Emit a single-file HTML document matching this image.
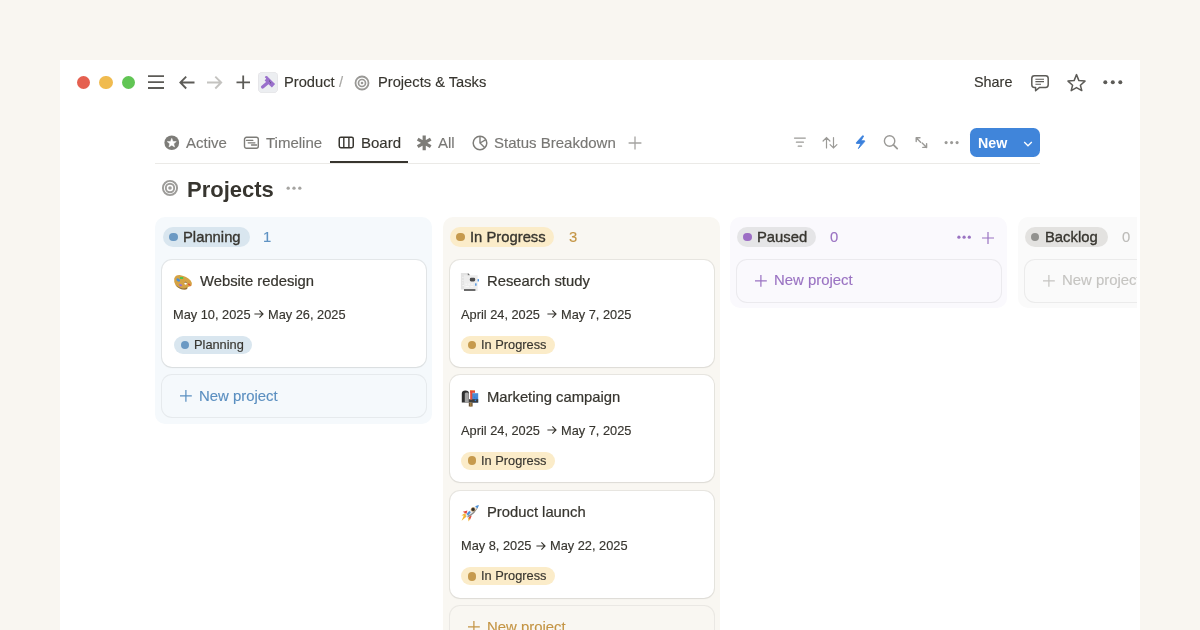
<!DOCTYPE html>
<html><head><meta charset="utf-8">
<style>
*{box-sizing:border-box;margin:0;padding:0}
html,body{width:1200px;height:630px;overflow:hidden}
body{background:#f9f6f1;font-family:"Liberation Sans",sans-serif;color:#37352f;position:relative}
.win{position:absolute;left:60px;top:60px;width:1080px;height:570px;background:#fff}
.a{position:absolute;white-space:nowrap;line-height:1em;will-change:transform}
.dot{position:absolute;border-radius:50%}
svg{position:absolute;overflow:visible}
.clip{position:absolute;left:0;top:0;width:1137px;height:630px;overflow:hidden}
.col{position:absolute;top:217px;width:277px;border-radius:10px}
.card{position:absolute;background:#fff;border-radius:10px;box-shadow:0 0 0 1px rgba(55,53,47,0.09),0 1px 2px rgba(15,15,15,0.05)}
.newb{position:absolute;border-radius:10px;box-shadow:0 0 0 1px rgba(55,53,47,0.075)}
.pill{position:absolute;height:20px;border-radius:10px}
.cpill{position:absolute;height:18px;border-radius:9px}
</style></head><body>
<div class="win"></div>
<div class="dot" style="left:76.9px;top:75.6px;width:13.2px;height:13.2px;background:#e56050"></div>
<div class="dot" style="left:99.4px;top:75.6px;width:13.2px;height:13.2px;background:#f0bb4f"></div>
<div class="dot" style="left:121.9px;top:75.6px;width:13.2px;height:13.2px;background:#61c554"></div>
<svg style="left:0;top:0" width="1200" height="630">
  <g stroke="#5c5b57" stroke-width="1.8" fill="none">
    <path d="M148 76.2H164M148 82.1H164M148 88H164"/>
    <path d="M194.5 82.5H180.5M186.2 76.6L180.3 82.5L186.2 88.5"/>
    <path d="M236.5 82.3H250M243.2 75.6V89"/>
  </g>
  <path d="M207 82.5H221M215.3 76.6L221.2 82.5L215.3 88.5" stroke="#c4c3c0" stroke-width="1.9" fill="none"/>
</svg>
<div style="position:absolute;left:258px;top:72.3px;width:19.8px;height:20.5px;background:#eceef1;border-radius:4.5px;box-shadow:inset 0 0 0 0.6px #e2e1e4"></div>
<svg style="left:258px;top:72.5px" width="20" height="20" viewBox="0 0 20 20">
  <path d="M4.6 14L10.6 9" stroke="#9a70cc" stroke-width="3.3" stroke-linecap="round"/>
  <path d="M13.9 14.4L17.1 11.1L10.4 4.4Q9 2.6 7.4 3.2L6.8 4.4Q8 4.6 8.2 5.8L6.6 7.4Z" fill="#9a70cc"/>
  <circle cx="11.6" cy="8" r="0.55" fill="#4a4458"/><circle cx="12.6" cy="9.8" r="0.55" fill="#4a4458"/>
</svg>
<div class="a" style="left:283.98px;top:74.91px;font-size:14.7px;color:#37352f;-webkit-text-stroke:0.15px #37352f;">Product</div>
<div class="a" style="left:338.68px;top:74.91px;font-size:14.7px;color:#a8a7a4;-webkit-text-stroke:0.15px #a8a7a4;">/</div>
<svg style="left:354.1px;top:74.5px" width="16" height="16" viewBox="0 0 16 16">
  <circle cx="8" cy="8" r="6.5" stroke="#999895" stroke-width="1.8" fill="none"/>
  <circle cx="8" cy="8" r="3.5" stroke="#999895" stroke-width="1.7" fill="none"/>
  <circle cx="8" cy="8" r="1.3" fill="#999895"/>
</svg>
<div class="a" style="left:378.18px;top:74.91px;font-size:14.7px;color:#37352f;-webkit-text-stroke:0.15px #37352f;">Projects &amp; Tasks</div>
<div class="a" style="left:974.29px;top:75.36px;font-size:14.4px;color:#37352f;-webkit-text-stroke:0.15px #37352f;">Share</div>
<svg style="left:0;top:0" width="1200" height="630">
  <path d="M1034.4 75.8H1045.6Q1048.2 75.8 1048.2 78.4V84.8Q1048.2 87.4 1045.6 87.4H1039.6L1035.6 90.8V87.4H1034.4Q1031.8 87.4 1031.8 84.8V78.4Q1031.8 75.8 1034.4 75.8Z" stroke="#5c5b57" stroke-width="1.5" fill="none" stroke-linejoin="round"/>
  <path d="M1035.4 79.3H1044M1035.4 81.6H1044M1035.4 84.3H1041" stroke="#5c5b57" stroke-width="1.1"/>
  <path d="M1076.5 74.6L1078.9 80.6L1085 81.1L1080.4 85.2L1081.8 90.6L1076.5 87.6L1071.2 90.6L1072.6 85.2L1068 81.1L1074.1 80.6Z" stroke="#5c5b57" stroke-width="1.5" fill="none" stroke-linejoin="round"/>
</svg>
<svg style="left:1102px;top:78px" width="22" height="8" viewBox="0 0 22 8">
  <circle cx="3.3" cy="4.2" r="2" fill="#5c5b57"/><circle cx="10.8" cy="4.2" r="2" fill="#5c5b57"/><circle cx="18.3" cy="4.2" r="2" fill="#5c5b57"/>
</svg>
<svg style="left:163.75px;top:135px" width="15.5" height="15.5" viewBox="0 0 16 16">
  <circle cx="8" cy="8" r="7.6" fill="#7d7c78"/>
  <path d="M8.00 3.44L9.27 6.64L12.68 6.83L10.05 9.02L10.88 12.30L8.00 10.51L5.12 12.30L5.95 9.02L3.32 6.83L6.73 6.64Z" fill="#fff" stroke="#fff" stroke-width="0.5" stroke-linejoin="round"/>
</svg>
<div class="a" style="left:185.76px;top:135.45px;font-size:15px;color:#787774;-webkit-text-stroke:0.15px #787774;">Active</div>
<svg style="left:243px;top:135.5px" width="17" height="14" viewBox="0 0 17 14">
  <rect x="1.5" y="1.3" width="13.8" height="11" rx="2" stroke="#7d7c78" stroke-width="1.4" fill="none"/>
  <path d="M3.4 4.3H9.9M5.2 6.8H11.9M8.5 9H13.6" stroke="#7d7c78" stroke-width="1.3" stroke-linecap="round"/>
</svg>
<div class="a" style="left:265.76px;top:135.45px;font-size:15px;color:#787774;-webkit-text-stroke:0.15px #787774;">Timeline</div>
<svg style="left:338.3px;top:136.3px" width="16" height="13" viewBox="0 0 16 13">
  <rect x="1.25" y="1.25" width="14" height="10.4" rx="1.6" stroke="#37352f" stroke-width="1.5" fill="none"/>
  <path d="M5.8 1.3V11.6M10.9 1.3V11.6" stroke="#37352f" stroke-width="1.4"/>
</svg>
<div class="a" style="left:360.76px;top:135.45px;font-size:15px;color:#37352f;-webkit-text-stroke:0.15px #37352f;">Board</div>
<svg style="left:416px;top:134.5px" width="16" height="16" viewBox="0 0 16 16">
  <path d="M8.2 0.6V15.2M1.7 4.15L14.7 11.65M1.7 11.65L14.7 4.15" stroke="#7d7c78" stroke-width="3.2"/>
</svg>
<div class="a" style="left:438.26px;top:135.45px;font-size:15px;color:#787774;-webkit-text-stroke:0.15px #787774;">All</div>
<svg style="left:472px;top:134.5px" width="16" height="16" viewBox="0 0 16 16">
  <circle cx="8" cy="8" r="6.8" stroke="#7d7c78" stroke-width="1.5" fill="none"/>
  <path d="M8 1.2V8L12.8 12.8M8 8L13.9 4.6" stroke="#7d7c78" stroke-width="1.4" fill="none"/>
</svg>
<div class="a" style="left:493.96px;top:135.45px;font-size:15px;color:#787774;-webkit-text-stroke:0.15px #787774;">Status Breakdown</div>
<svg style="left:628px;top:135.5px" width="14" height="14" viewBox="0 0 14 14">
  <path d="M7 0.6V13.4M0.6 7H13.4" stroke="#a5a4a1" stroke-width="1.3"/>
</svg>
<svg style="left:0;top:0" width="1200" height="630">
  <g stroke="#9b9a97" stroke-width="1.3" fill="none" stroke-linecap="round">
    <path d="M794.5 138.1H805.3M796.4 142.2H803.4M798.2 146.2H801.6" stroke-width="1.25"/>
    <path d="M826.5 148V137.6M823.1 141L826.5 137.6L829.9 141M833.5 137.6V148M830.1 144.6L833.5 148L836.9 144.6" stroke-width="1.2"/>
    <circle cx="889.6" cy="141" r="5.2" stroke-width="1.4"/><path d="M893.5 144.9L897.2 148.6" stroke-width="1.8"/>
    <path d="M916.2 137.8L920.6 142.2M916.2 137.8V141.6M916.2 137.8H920M926.6 147.4L922.2 143M926.6 147.4V143.6M926.6 147.4H922.8" stroke-width="1.4"/>
  </g>
  <g fill="#9b9a97"><circle cx="946.1" cy="142.6" r="1.55"/><circle cx="951.6" cy="142.6" r="1.55"/><circle cx="957.1" cy="142.6" r="1.55"/></g>
  <path d="M862.8 135.6L856.4 142.6L856.4 143.4H860.9L858.4 148.6L864.6 141.6V140.8H860.9L863.6 136.2Z" fill="#3a80dc" stroke="#3a80dc" stroke-width="0.9" stroke-linejoin="round"/>
</svg>
<div style="position:absolute;left:970.2px;top:128px;width:69.5px;height:28.8px;background:#4085da;border-radius:6.5px"></div>
<div class="a" style="left:978.29px;top:136.13px;font-size:14.2px;color:#fff;font-weight:700;">New</div>
<svg style="left:1022px;top:139.5px" width="12" height="8" viewBox="0 0 12 8">
  <path d="M2.2 2L6 5.8L9.8 2" stroke="#fff" stroke-width="1.3" fill="none"/>
</svg>
<div style="position:absolute;left:155px;top:163px;width:885px;height:1px;background:#ebeae7"></div>
<div style="position:absolute;left:330px;top:161px;width:78px;height:2px;background:#37352f"></div>
<svg style="left:161.3px;top:178.9px" width="18" height="18" viewBox="0 0 18 18">
  <circle cx="9" cy="9" r="7.1" stroke="#9d9c99" stroke-width="1.9" fill="none"/>
  <circle cx="9" cy="9" r="4.2" stroke="#9d9c99" stroke-width="1.9" fill="none"/>
  <circle cx="9" cy="9" r="1.8" fill="#9d9c99"/>
</svg>
<div class="a" style="left:187.21px;top:178.50px;font-size:22px;color:#37352f;font-weight:700;">Projects</div>
<svg style="left:285px;top:185px" width="18" height="6" viewBox="0 0 18 6">
  <circle cx="3.2" cy="3.2" r="1.65" fill="#a5a4a1"/><circle cx="9" cy="3.2" r="1.65" fill="#a5a4a1"/><circle cx="14.8" cy="3.2" r="1.65" fill="#a5a4a1"/>
</svg>
<div class="clip">
<div class="col" style="left:155px;height:207px;background:#f5f9fc"></div>
<div class="pill" style="left:162.8px;top:227px;width:87px;background:#d9e6ef"></div>
<div class="dot" style="left:169.10000000000002px;top:232.7px;width:8.6px;height:8.6px;background:#6b99c3"></div>
<div class="a" style="left:182.87px;top:229.62px;font-size:14.8px;color:#37352f;-webkit-text-stroke:0.35px #37352f;">Planning</div>
<div class="a" style="left:262.97px;top:229.62px;font-size:14.8px;color:#5f93c3;-webkit-text-stroke:0.15px #5f93c3;">1</div>
<div class="col" style="left:443px;height:430px;background:#f9f7f2"></div>
<div class="pill" style="left:449.8px;top:227px;width:104.7px;background:#fbecc9"></div>
<div class="dot" style="left:456.1px;top:232.7px;width:8.6px;height:8.6px;background:#c69a4d"></div>
<div class="a" style="left:469.87px;top:229.62px;font-size:14.8px;color:#37352f;-webkit-text-stroke:0.35px #37352f;">In Progress</div>
<div class="a" style="left:569.07px;top:229.62px;font-size:14.8px;color:#c49545;-webkit-text-stroke:0.15px #c49545;">3</div>
<div class="col" style="left:729.8px;height:91px;background:#faf9fd"></div>
<div class="pill" style="left:737px;top:227px;width:79px;background:#e5e5e7"></div>
<div class="dot" style="left:743.3px;top:232.7px;width:8.6px;height:8.6px;background:#9d6ec5"></div>
<div class="a" style="left:757.07px;top:229.62px;font-size:14.8px;color:#37352f;-webkit-text-stroke:0.35px #37352f;">Paused</div>
<div class="a" style="left:830.07px;top:229.62px;font-size:14.8px;color:#9a73c2;-webkit-text-stroke:0.15px #9a73c2;">0</div>
<div class="col" style="left:1017.8px;height:91px;background:#fafafa"></div>
<div class="pill" style="left:1024.5px;top:227px;width:83.1px;background:#e3e2e0"></div>
<div class="dot" style="left:1030.8px;top:232.7px;width:8.6px;height:8.6px;background:#91918e"></div>
<div class="a" style="left:1044.57px;top:229.62px;font-size:14.8px;color:#37352f;-webkit-text-stroke:0.35px #37352f;">Backlog</div>
<div class="a" style="left:1122.37px;top:229.62px;font-size:14.8px;color:#bcbbb8;-webkit-text-stroke:0.15px #bcbbb8;">0</div>
<div class="card" style="left:162px;top:259.7px;width:264px;height:107px"></div>
<svg style="left:170px;top:270px" width="26" height="26" viewBox="0 0 26 26">
  <path d="M4.2 8.6Q5.6 4.6 10.6 5.2Q16.4 6 20.6 10.6Q22.8 13.4 21.6 15.6Q20.8 16.4 19.4 16.6Q17.6 16.6 17.4 18.2Q16.8 19.8 14.2 19.6Q8.8 19 5.6 15.2Q3.6 12 4.2 8.6Z" fill="#d5a244"/>
  <path d="M5.6 15.2Q8.8 19 14.2 19.6Q16.8 19.8 17.4 18.2L16.6 17.6Q15.4 18.8 12.6 18.4Q8.6 17.6 5.6 15.2Z" fill="#8a6a3a"/>
  <ellipse cx="15.6" cy="13.6" rx="1.3" ry="1.1" fill="#fff"/>
  <path d="M14.6 12.6Q15.6 11.8 16.8 12.8" stroke="#5a4630" stroke-width="0.6" fill="none"/>
  <ellipse cx="8.2" cy="10" rx="2.1" ry="1.4" transform="rotate(40 8.2 10)" fill="#4a90d9"/>
  <rect x="9.9" y="6.9" width="3.3" height="2.1" rx="0.5" fill="#4fc34c"/>
  <path d="M9 14.2Q10.6 13.4 12.4 15.4Q11.6 16.6 9.6 16Z" fill="#9a70d2"/>
  <path d="M18.2 13.2Q20.6 14 20.8 15.6Q19.4 16 18 14.6Z" fill="#e5483a"/>
</svg>
<div class="a" style="left:199.77px;top:273.72px;font-size:14.8px;color:#37352f;-webkit-text-stroke:0.22px #37352f;">Website redesign</div>
<div class="a" style="left:173.24px;top:308.82px;font-size:12.8px;color:#37352f;-webkit-text-stroke:0.15px #37352f;">May 10, 2025</div>
<svg style="left:254.2px;top:310.09999999999997px" width="10" height="8" viewBox="0 0 10 8">
  <path d="M0.4 4H9M5.4 0.4L9 4L5.4 7.6" stroke="#37352f" stroke-width="1.15" fill="none"/>
</svg>
<div class="a" style="left:268.24px;top:308.82px;font-size:12.8px;color:#37352f;-webkit-text-stroke:0.15px #37352f;">May 26, 2025</div>
<div class="cpill" style="left:173.7px;top:336.0px;width:78px;background:#d9e6ef"></div>
<div class="dot" style="left:180.5px;top:340.6px;width:8.6px;height:8.6px;background:#6b99c3"></div>
<div class="a" style="left:193.54px;top:338.82px;font-size:12.8px;color:#37352f;-webkit-text-stroke:0.15px #37352f;">Planning</div>
<div class="card" style="left:450px;top:259.7px;width:264px;height:107px"></div>
<svg style="left:457px;top:268px" width="26" height="26" viewBox="0 0 26 26">
  <path d="M3.9 5H10.9L12.6 6.8V21.5H3.9Z" fill="#e2e2e2"/>
  <path d="M10.9 5L12.8 7L12.8 8.4L10.6 8.4Z" fill="#6a6a6a"/>
  <path d="M5.4 9.4H6.4M7.6 9.4H8.8M5.4 12.4H6.4M7.6 12.4H9.6M5.4 15H6.2M5.4 17.6H9" stroke="#f8f8f8" stroke-width="1"/>
  <rect x="6.9" y="7.2" width="13.8" height="15.8" fill="#ededed"/>
  <rect x="12.8" y="9.8" width="5.4" height="3.6" rx="1.4" fill="#4d4d4d"/>
  <path d="M8.4 16.2H10M11.2 16.2H13M14.2 16.2H16M8.4 18.6H12M13.4 18.6H16.4" stroke="#fbfbfb" stroke-width="0.9"/>
  <rect x="7" y="21" width="11.4" height="2" fill="#6b6b6b"/>
  <rect x="20.6" y="11" width="1.3" height="2.6" rx="0.5" fill="#3d8be0"/>
  <rect x="18.2" y="15.2" width="1.3" height="2.6" rx="0.5" fill="#3d8be0"/>
</svg>
<div class="a" style="left:487.27px;top:273.72px;font-size:14.8px;color:#37352f;-webkit-text-stroke:0.22px #37352f;">Research study</div>
<div class="a" style="left:460.74px;top:308.82px;font-size:12.8px;color:#37352f;-webkit-text-stroke:0.15px #37352f;">April 24, 2025</div>
<svg style="left:546.6px;top:310.09999999999997px" width="10" height="8" viewBox="0 0 10 8">
  <path d="M0.4 4H9M5.4 0.4L9 4L5.4 7.6" stroke="#37352f" stroke-width="1.15" fill="none"/>
</svg>
<div class="a" style="left:560.64px;top:308.82px;font-size:12.8px;color:#37352f;-webkit-text-stroke:0.15px #37352f;">May 7, 2025</div>
<div class="cpill" style="left:460.9px;top:336.0px;width:94px;background:#fbecc9"></div>
<div class="dot" style="left:467.7px;top:340.6px;width:8.6px;height:8.6px;background:#c69a4d"></div>
<div class="a" style="left:480.74px;top:338.82px;font-size:12.8px;color:#37352f;-webkit-text-stroke:0.15px #37352f;">In Progress</div>
<div class="card" style="left:450px;top:375.4px;width:264px;height:107px"></div>
<svg style="left:457px;top:384px" width="26" height="26" viewBox="0 0 26 26">
  <path d="M4.8 9.8Q4.8 6.6 8.4 6.6Q12 6.6 12 9.8V18.6H4.8Z" fill="#2f2f2f"/>
  <path d="M7.8 9.8Q8 8.6 9.6 8.6Q11.6 8.6 11.8 9.8V18.4H7.8Z" fill="#a3a3a3"/>
  <rect x="14.6" y="9.2" width="6.6" height="9.4" fill="#4a8cd4"/>
  <rect x="12" y="15.2" width="9.2" height="3.4" fill="#3c3c3c"/>
  <circle cx="17.6" cy="13.4" r="0.8" fill="#2d7ee0"/><circle cx="19.6" cy="14.4" r="0.8" fill="#2d7ee0"/><circle cx="18.4" cy="16.4" r="0.8" fill="#2d7ee0"/>
  <rect x="13.2" y="6.2" width="2.1" height="9.4" fill="#e44a3a"/>
  <rect x="13.2" y="6.2" width="4.8" height="2.6" fill="#e44a3a"/>
  <rect x="13.2" y="6" width="4.8" height="0.5" fill="#e8c070"/>
  <rect x="11.8" y="18.6" width="3.8" height="3.9" fill="#6a5234"/>
  <rect x="13.2" y="18.6" width="1.2" height="3.9" fill="#b08a4a"/>
</svg>
<div class="a" style="left:487.27px;top:390.22px;font-size:14.8px;color:#37352f;-webkit-text-stroke:0.22px #37352f;">Marketing campaign</div>
<div class="a" style="left:460.74px;top:424.52px;font-size:12.8px;color:#37352f;-webkit-text-stroke:0.15px #37352f;">April 24, 2025</div>
<svg style="left:546.6px;top:425.79999999999995px" width="10" height="8" viewBox="0 0 10 8">
  <path d="M0.4 4H9M5.4 0.4L9 4L5.4 7.6" stroke="#37352f" stroke-width="1.15" fill="none"/>
</svg>
<div class="a" style="left:560.64px;top:424.52px;font-size:12.8px;color:#37352f;-webkit-text-stroke:0.15px #37352f;">May 7, 2025</div>
<div class="cpill" style="left:460.9px;top:451.7px;width:94px;background:#fbecc9"></div>
<div class="dot" style="left:467.7px;top:456.29999999999995px;width:8.6px;height:8.6px;background:#c69a4d"></div>
<div class="a" style="left:480.74px;top:454.52px;font-size:12.8px;color:#37352f;-webkit-text-stroke:0.15px #37352f;">In Progress</div>
<div class="card" style="left:450px;top:491.1px;width:264px;height:107px"></div>
<svg style="left:457px;top:499px" width="26" height="26" viewBox="0 0 26 26">
  <path d="M7.6 14.2L4.4 16.4L6.8 16.6L4.6 21.8L10.2 17Z" fill="#f3b534"/>
  <path d="M11 18.6L11.6 22.4L13.4 19.4Z" fill="#f3b534"/>
  <path d="M5.8 12.8L10.4 11.4L9.4 15Z" fill="#e4493a"/>
  <path d="M13 20.8L14.8 16.4L11.4 17.4Z" fill="#e4493a"/>
  <path d="M8.6 16.8Q12 9.4 21.8 6Q18.6 15.6 10.2 18.4Z" fill="#e9e9e9"/>
  <path d="M10.2 18.4Q18.6 15.6 21.8 6Q17.8 13.6 11 16.6Z" fill="#8c8c8c"/>
  <path d="M18.2 7.2Q20.2 6.3 21.8 6Q21.4 7.8 20.4 9.6Z" fill="#4a90d9"/>
  <path d="M9.6 15.2Q10.8 13 12.6 12L13.8 13.2Q13 14.8 11 16.4Z" fill="#4a90d9"/>
  <circle cx="16.1" cy="10.4" r="1.9" fill="#2f2f2f"/>
  <circle cx="16.1" cy="10.4" r="1.9" fill="none" stroke="#c8913a" stroke-width="0.5"/>
</svg>
<div class="a" style="left:487.27px;top:504.72px;font-size:14.8px;color:#37352f;-webkit-text-stroke:0.22px #37352f;">Product launch</div>
<div class="a" style="left:460.74px;top:540.22px;font-size:12.8px;color:#37352f;-webkit-text-stroke:0.15px #37352f;">May 8, 2025</div>
<svg style="left:536.0px;top:541.5px" width="10" height="8" viewBox="0 0 10 8">
  <path d="M0.4 4H9M5.4 0.4L9 4L5.4 7.6" stroke="#37352f" stroke-width="1.15" fill="none"/>
</svg>
<div class="a" style="left:550.04px;top:540.22px;font-size:12.8px;color:#37352f;-webkit-text-stroke:0.15px #37352f;">May 22, 2025</div>
<div class="cpill" style="left:460.9px;top:567.4px;width:94px;background:#fbecc9"></div>
<div class="dot" style="left:467.7px;top:572.0px;width:8.6px;height:8.6px;background:#c69a4d"></div>
<div class="a" style="left:480.74px;top:570.22px;font-size:12.8px;color:#37352f;-webkit-text-stroke:0.15px #37352f;">In Progress</div>
<div class="newb" style="left:162px;top:374.9px;width:264px;height:42px"></div>
<svg style="left:179.7px;top:390.0px" width="11.8" height="11.8" viewBox="0 0 12 12"><path d="M6 0V12M0 6H12" stroke="#5b8fc0" stroke-width="1.25"/></svg>
<div class="a" style="left:198.97px;top:388.63px;font-size:14.9px;color:#5b8fc0;-webkit-text-stroke:0.15px #5b8fc0;">New project</div>
<div class="newb" style="left:450px;top:605.8px;width:264px;height:42px"></div>
<svg style="left:467.7px;top:620.9px" width="11.8" height="11.8" viewBox="0 0 12 12"><path d="M6 0V12M0 6H12" stroke="#c49545" stroke-width="1.25"/></svg>
<div class="a" style="left:486.97px;top:619.53px;font-size:14.9px;color:#c49545;-webkit-text-stroke:0.15px #c49545;">New project</div>
<div class="newb" style="left:736.8px;top:259.7px;width:264px;height:42px"></div>
<svg style="left:754.5px;top:274.8px" width="11.8" height="11.8" viewBox="0 0 12 12"><path d="M6 0V12M0 6H12" stroke="#9a73c2" stroke-width="1.25"/></svg>
<div class="a" style="left:773.77px;top:273.43px;font-size:14.9px;color:#9a73c2;-webkit-text-stroke:0.15px #9a73c2;">New project</div>
<div class="newb" style="left:1024.8px;top:259.7px;width:264px;height:42px"></div>
<svg style="left:1042.5px;top:274.8px" width="11.8" height="11.8" viewBox="0 0 12 12"><path d="M6 0V12M0 6H12" stroke="#c5c4c1" stroke-width="1.25"/></svg>
<div class="a" style="left:1061.77px;top:273.43px;font-size:14.9px;color:#c5c4c1;-webkit-text-stroke:0.15px #c5c4c1;">New project</div>
<svg style="left:955.5px;top:233.6px" width="18" height="6" viewBox="0 0 18 6">
  <circle cx="2.9" cy="3.2" r="1.6" fill="#9a73c2"/><circle cx="8.1" cy="3.2" r="1.6" fill="#9a73c2"/><circle cx="13.3" cy="3.2" r="1.6" fill="#9a73c2"/>
</svg>
<svg style="left:982.2px;top:231.5px" width="12" height="12" viewBox="0 0 12 12"><path d="M6 0V12M0 6H12" stroke="#9a73c2" stroke-width="1.2"/></svg>
</div>
</body></html>
